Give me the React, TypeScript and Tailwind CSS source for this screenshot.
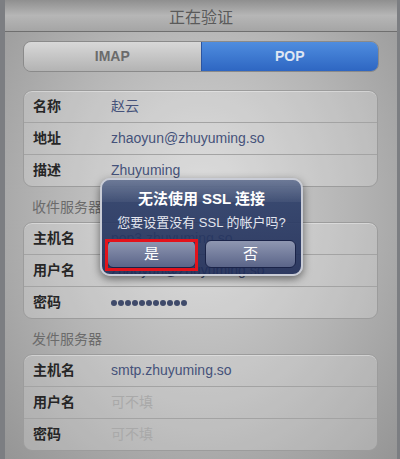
const font = { fontFamily: '"Liberation Sans","Noto Sans CJK SC",sans-serif' };

type Row = { label: string; value: string; kind?: "value" | "placeholder" | "dots" };

const Group = ({ rows }: { rows: Row[] }) => (
  <div className="ml-[18px] mr-[19px] rounded-[9px] border border-[#9c9c9c] bg-white/20 shadow-[inset_0_1px_0_rgba(255,255,255,0.35)]">
    {rows.map((row, i) => (
      <div
        key={row.label}
        className={`flex items-center ${i > 0 ? "h-[32px] border-t border-[#a3a3a3]" : "h-[31px]"}`}
      >
        <span className="w-[87px] pl-[9px] text-[14px] font-bold text-[#262626]">{row.label}</span>
        {row.kind === "dots" ? (
          <span className="flex gap-[1px]">
            {Array.from({ length: 11 }).map((_, k) => (
              <span key={k} className="h-[6px] w-[6px] rounded-full bg-[#3f4a6a]" />
            ))}
          </span>
        ) : (
          <span
            className={`text-[14px] ${row.kind === "placeholder" ? "text-[#a9a9a9]" : "text-[#45527a]"}`}
          >
            {row.value}
          </span>
        )}
      </div>
    ))}
  </div>
);

const SectionLabel = ({ text }: { text: string }) => (
  <div className="pl-[27px] pt-[10px] pb-[5px] text-[14px] leading-[20px] text-[#6b6b6b]">{text}</div>
);

export default function App() {
  return (
    <div
      style={font}
      className="relative h-[459px] w-[400px] overflow-hidden border-l-[5px] border-r-[3px] border-[#7c7e82] bg-[radial-gradient(ellipse_at_50%_45%,#d6d6d6_0%,#b4b4b4_55%,#959595_100%)]"
    >
      {/* title bar */}
      <div className="h-[32px] border-b border-[#6f6f6f] bg-gradient-to-b from-[#8f8f8f] via-[#b6b6b6] to-[#a5a5a5]">
        <div className="flex h-full items-center justify-center pt-[4px] text-[16px] text-[#5a5a5a]">
          正在验证
        </div>
      </div>

      {/* segmented control */}
      <div className="mx-[18px] mt-[9px] flex h-[31px] overflow-hidden rounded-[8px] border border-[#8a8a8a]">
        <div className="flex flex-1 items-center justify-center bg-gradient-to-b from-[#d8d8d8] to-[#b3b3b3] text-[14px] font-bold text-[#6b6b6b]">
          IMAP
        </div>
        <div className="flex flex-1 items-center justify-center border-l border-[#2c55a0] bg-gradient-to-b from-[#4f8ddf] to-[#2e66c2] text-[14px] font-bold text-[#dfe6f3]">
          POP
        </div>
      </div>

      <div className="mt-[18px]">
        <Group
          rows={[
            { label: "名称", value: "赵云" },
            { label: "地址", value: "zhaoyun@zhuyuming.so" },
            { label: "描述", value: "Zhuyuming" },
          ]}
        />
      </div>

      <SectionLabel text="收件服务器" />
      <Group
        rows={[
          { label: "主机名", value: "pop3.zhuyuming.so" },
          { label: "用户名", value: "zhaoyun@zhuyuming.so" },
          { label: "密码", value: "", kind: "dots" },
        ]}
      />

      <SectionLabel text="发件服务器" />
      <Group
        rows={[
          { label: "主机名", value: "smtp.zhuyuming.so" },
          { label: "用户名", value: "可不填", kind: "placeholder" },
          { label: "密码", value: "可不填", kind: "placeholder" },
        ]}
      />

      {/* alert */}
      <div className="absolute left-[95px] top-[178px] w-[203px] overflow-hidden rounded-[10px] border-2 border-[#c9ccd6] bg-gradient-to-b from-[#34466f]/95 to-[#1d2a55]/90 px-[5px] pb-[6px] shadow-[0_3px_8px_rgba(0,0,0,0.5)]">
        <div className="pointer-events-none absolute inset-x-0 top-0 h-[22px] bg-gradient-to-b from-white/25 to-white/5" />
        <div className="relative pt-[8px] text-center text-[15px] font-bold text-white">无法使用 SSL 连接</div>
        <div className="relative mt-[2px] text-center text-[13px] text-[#e3e6ef]">您要设置没有 SSL 的帐户吗?</div>
        <div className="relative mt-[8px] flex gap-[9px]">
          <div className="relative flex-1">
            <div className="flex h-[28px] items-center justify-center rounded-[6px] border border-[#1a2348] bg-gradient-to-b from-[#8f97b1] to-[#5b6589] text-[15px] text-white">
              是
            </div>
            <span className="pointer-events-none absolute -inset-x-[2px] -top-[1px] -bottom-[3px] border-[3px] border-[#e3121b]" />
          </div>
          <div className="flex h-[28px] flex-1 items-center justify-center rounded-[6px] border border-[#1a2348] bg-gradient-to-b from-[#8f97b1] to-[#5b6589] text-[15px] text-white">
            否
          </div>
        </div>
      </div>
    </div>
  );
}
